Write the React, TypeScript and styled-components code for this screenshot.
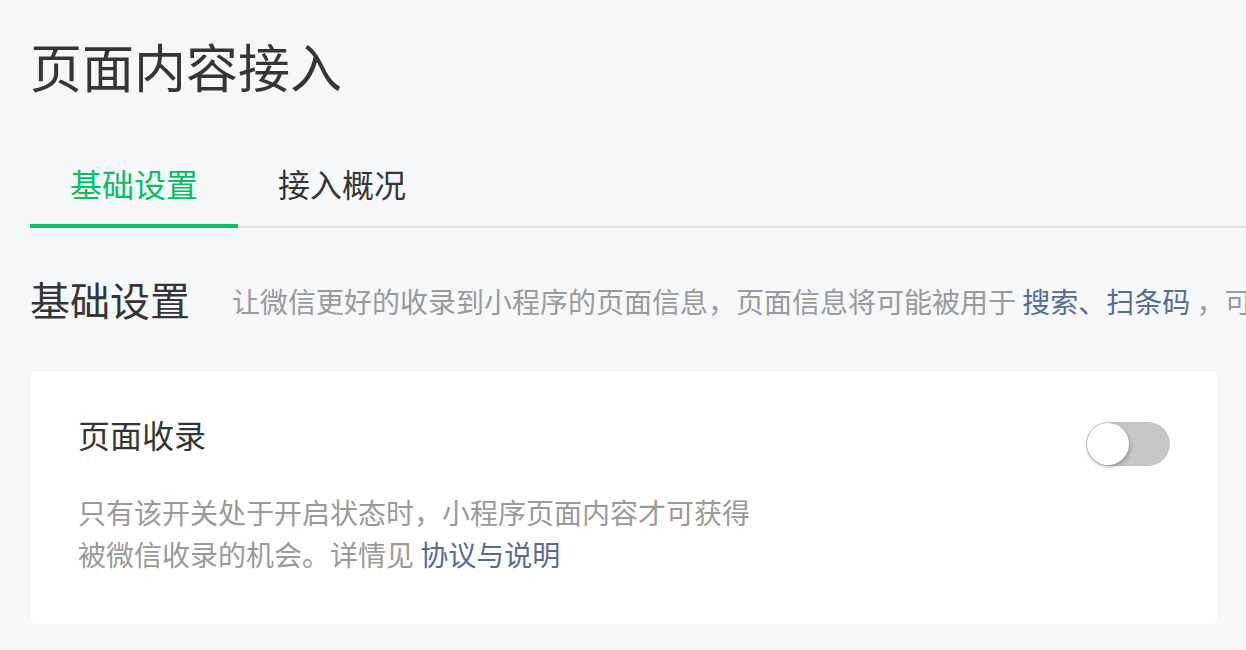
import React, { useState } from "react";
import styled, { createGlobalStyle } from "styled-components";

const Colors = {
  bg: "#f7f8fa",
  text: "#353535",
  desc: "#9a9a9a",
  link: "#576b95",
  green: "#07c160",
  line: "#e3e4e6",
  track: "#c6c6c6",
};

const GlobalStyle = createGlobalStyle`
  html, body {
    margin: 0;
    padding: 0;
    background: ${Colors.bg};
    overflow: hidden;
  }
  body {
    font-family: "Noto Sans CJK SC", "Noto Sans", sans-serif;
    color: ${Colors.text};
  }
`;

const tabs = ["基础设置", "接入概况"];

function App() {
  const [active, setActive] = useState(0);
  const [enabled, setEnabled] = useState(false);
  return (
    <Page>
      <GlobalStyle />
      <PageTitle>页面内容接入</PageTitle>
      <TabBar>
        {tabs.map((t, i) => (
          <Tab key={t} isActive={active === i} onClick={() => setActive(i)}>
            {t}
          </Tab>
        ))}
      </TabBar>
      <SectionHead>
        <SectionTitle>基础设置</SectionTitle>
        <SectionDesc>
          让微信更好的收录到小程序的页面信息，页面信息将可能被用于{" "}
          <Link>搜索、扫条码</Link> ，可在后台查看页面的收录情况
        </SectionDesc>
      </SectionHead>
      <Card>
        <CardRow>
          <CardTitle>页面收录</CardTitle>
          <Switch isOn={enabled} onClick={() => setEnabled(!enabled)}>
            <Knob isOn={enabled} />
          </Switch>
        </CardRow>
        <CardDesc>
          只有该开关处于开启状态时，小程序页面内容才可获得
          <br />
          被微信收录的机会。详情见 <Link>协议与说明</Link>
        </CardDesc>
      </Card>
    </Page>
  );
}

const Page = styled.div`
  padding: 30px 0 0 30px;
  overflow: hidden;
`;

const PageTitle = styled.h1`
  margin: 0;
  font-size: 52px;
  line-height: 72px;
  font-weight: 400;
  color: ${Colors.text};
`;

const TabBar = styled.div`
  display: flex;
  margin-top: 40px;
  border-bottom: 2px solid ${Colors.line};
  height: 86px;
  box-sizing: border-box;
`;

const Tab = styled.div<{ isActive: boolean }>`
  position: relative;
  padding: 0 40px;
  font-size: 32px;
  line-height: 82px;
  cursor: pointer;
  color: ${p => (p.isActive ? Colors.green : Colors.text)};
  &::after {
    content: "";
    position: absolute;
    left: 0;
    right: 0;
    bottom: -2px;
    height: 4px;
    background: ${p => (p.isActive ? Colors.green : "transparent")};
  }
`;

const SectionHead = styled.div`
  display: flex;
  align-items: center;
  margin-top: 43px;
  height: 56px;
  white-space: nowrap;
`;

const SectionTitle = styled.div`
  font-size: 40px;
  line-height: 56px;
  color: ${Colors.text};
`;

const SectionDesc = styled.div`
  margin-left: 42px;
  margin-top: 4px;
  font-size: 28px;
  line-height: 40px;
  color: ${Colors.desc};
`;

const Link = styled.a`
  color: ${Colors.link};
  cursor: pointer;
`;

const Card = styled.div`
  margin-top: 45px;
  width: 1188px;
  box-sizing: border-box;
  background: #fff;
  border-radius: 6px;
  box-shadow: 0 1px 4px rgba(0, 0, 0, 0.04);
  padding: 38px 48px 49px 48px;
`;

const CardRow = styled.div`
  display: flex;
  justify-content: space-between;
  align-items: flex-start;
`;

const CardTitle = styled.div`
  font-size: 32px;
  line-height: 48px;
  color: ${Colors.text};
`;

const Switch = styled.div<{ isOn: boolean }>`
  position: relative;
  margin-top: 12px;
  width: 84px;
  height: 44px;
  border-radius: 22px;
  background: ${p => (p.isOn ? Colors.green : Colors.track)};
  cursor: pointer;
  transition: background 0.2s ease-in-out;
`;

const Knob = styled.div<{ isOn: boolean }>`
  position: absolute;
  top: 1px;
  left: ${p => (p.isOn ? "41px" : "1px")};
  width: 42px;
  height: 42px;
  border-radius: 50%;
  background: #fff;
  box-shadow: 1px 2px 4px rgba(0, 0, 0, 0.25);
  transition: left 0.2s ease-in-out;
`;

const CardDesc = styled.div`
  margin-top: 25px;
  font-size: 28px;
  line-height: 42px;
  color: ${Colors.desc};
`;

export default App;
